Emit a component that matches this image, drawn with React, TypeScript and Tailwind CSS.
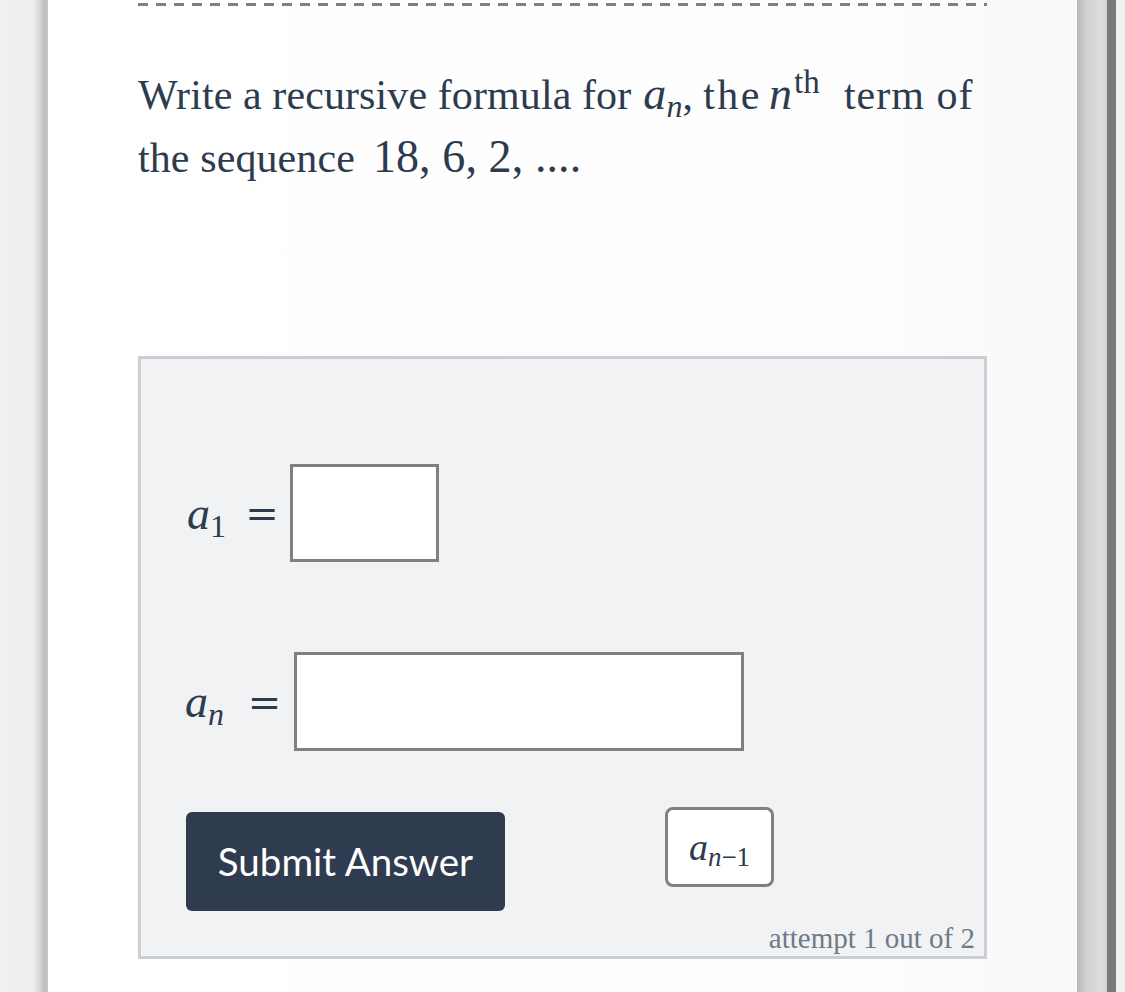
import React from "react";

const serif = "font-['Liberation_Serif','Times_New_Roman',serif]";
const eqFont = "font-['DejaVu_Serif','Liberation_Serif',serif]";

function A1() {
  return (
    <span className={`${serif} text-[46px] whitespace-nowrap`}>
      <span className="italic">a</span>
      <sub className="text-[32px]">1</sub>
    </span>
  );
}

function AN({ size = "text-[46px]", subSize = "text-[32px]", minus = false }: { size?: string; subSize?: string; minus?: boolean }) {
  return (
    <span className={`${serif} ${size} whitespace-nowrap`}>
      <span className="italic">a</span>
      <sub className={subSize}>
        <span className="italic">n</span>
        {minus ? <span>−1</span> : null}
      </sub>
    </span>
  );
}

function Eq({ w }: { w: string }) {
  return (
    <span className={`${eqFont} ${w} flex shrink-0 justify-center text-[40px] leading-none`}>=</span>
  );
}

export default function App() {
  return (
    <div className="flex h-[992px] w-[1125px] overflow-hidden bg-[#efefef]">
      <div className="h-full w-[48px] shrink-0 bg-[linear-gradient(to_right,#f0f0f0_0px,#eeeeee_33px,#dadada_39px,#bdbdbd_45px,#c9c9c9_48px)]" />
      <div className="h-full w-[1029px] shrink-0 bg-[linear-gradient(to_right,#ffffff,#fdfdfd_80%,#f8f8f8)] px-[90px]">
        <div className="flex h-full w-[849px] flex-col">
          <div className="mt-[3px] h-[3px] w-full bg-[repeating-linear-gradient(90deg,#808080_0px,#808080_10px,transparent_10px,transparent_18px)]" />
          <p className={`${serif} mt-[57px] whitespace-nowrap text-[42px] leading-[61px] tracking-[0.1px] text-[#2d3b4f]`}>
            Write a recursive formula for
            <span className="ml-[12px] italic text-[46px]">a</span>
            <sub className="text-[32px] italic">n</sub>,
            <span className="ml-[10px] tracking-[2.5px]">the</span>
            <span className="ml-[7px] italic text-[46px]">n</span>
            <sup className="ml-[2px] text-[33px]">th</sup>
            <span className="ml-[24px] tracking-[1px]">term of</span>
            <br />
            the sequence
            <span className="ml-[18px] text-[46px]">18, 6, 2, ....</span>
          </p>

          <div className="mt-[167px] flex h-[603px] w-[849px] flex-col border-[3px] border-[#cbcfd4] bg-[#f1f2f4]">
            <div className="mt-[105px] flex items-center pl-[46px] text-[#2d3b4f]">
              <span className="w-[60px] shrink-0">
                <A1 />
              </span>
              <Eq w="w-[30px]" />
              <div className="ml-[13px] h-[98px] w-[149px] shrink-0 border-[3px] border-[#808080] bg-white" />
            </div>

            <div className="mt-[90px] flex items-center pl-[44px] text-[#2d3b4f]">
              <span className="w-[63px] shrink-0">
                <AN />
              </span>
              <Eq w="w-[33px]" />
              <div className="ml-[13px] h-[99px] w-[450px] shrink-0 border-[3px] border-[#808080] bg-white" />
            </div>

            <div className="mt-[56px] flex items-start pl-[45px]">
              <button className="mt-[5px] flex h-[99px] w-[319px] shrink-0 items-center justify-center rounded-[6px] bg-[#2f3c4f] font-['Lato',sans-serif] text-[38.5px] text-white">
                Submit Answer
              </button>
              <div className="ml-[160px] flex h-[80px] w-[109px] shrink-0 items-center justify-center rounded-[8px] border-[3px] border-[#808080] bg-white text-[#2d3b4f]">
                <AN size="text-[38px]" subSize="text-[27px]" minus />
              </div>
            </div>

            <div className="mt-auto pr-[9px] text-right">
              <span className={`${serif} text-[29px] leading-[36px] text-[#6f7a87]`}>attempt 1 out of 2</span>
            </div>
          </div>
        </div>
      </div>
      <div className="h-full w-[30px] shrink-0 bg-[linear-gradient(to_right,#b8b8b8,#d2d2d2_35%,#dedede_80%,#d4d4d4)]" />
      <div className="h-full w-[9px] shrink-0 bg-[#7a7a7a]" />
      <div className="h-full flex-1 bg-[#f1f1f1]" />
    </div>
  );
}
